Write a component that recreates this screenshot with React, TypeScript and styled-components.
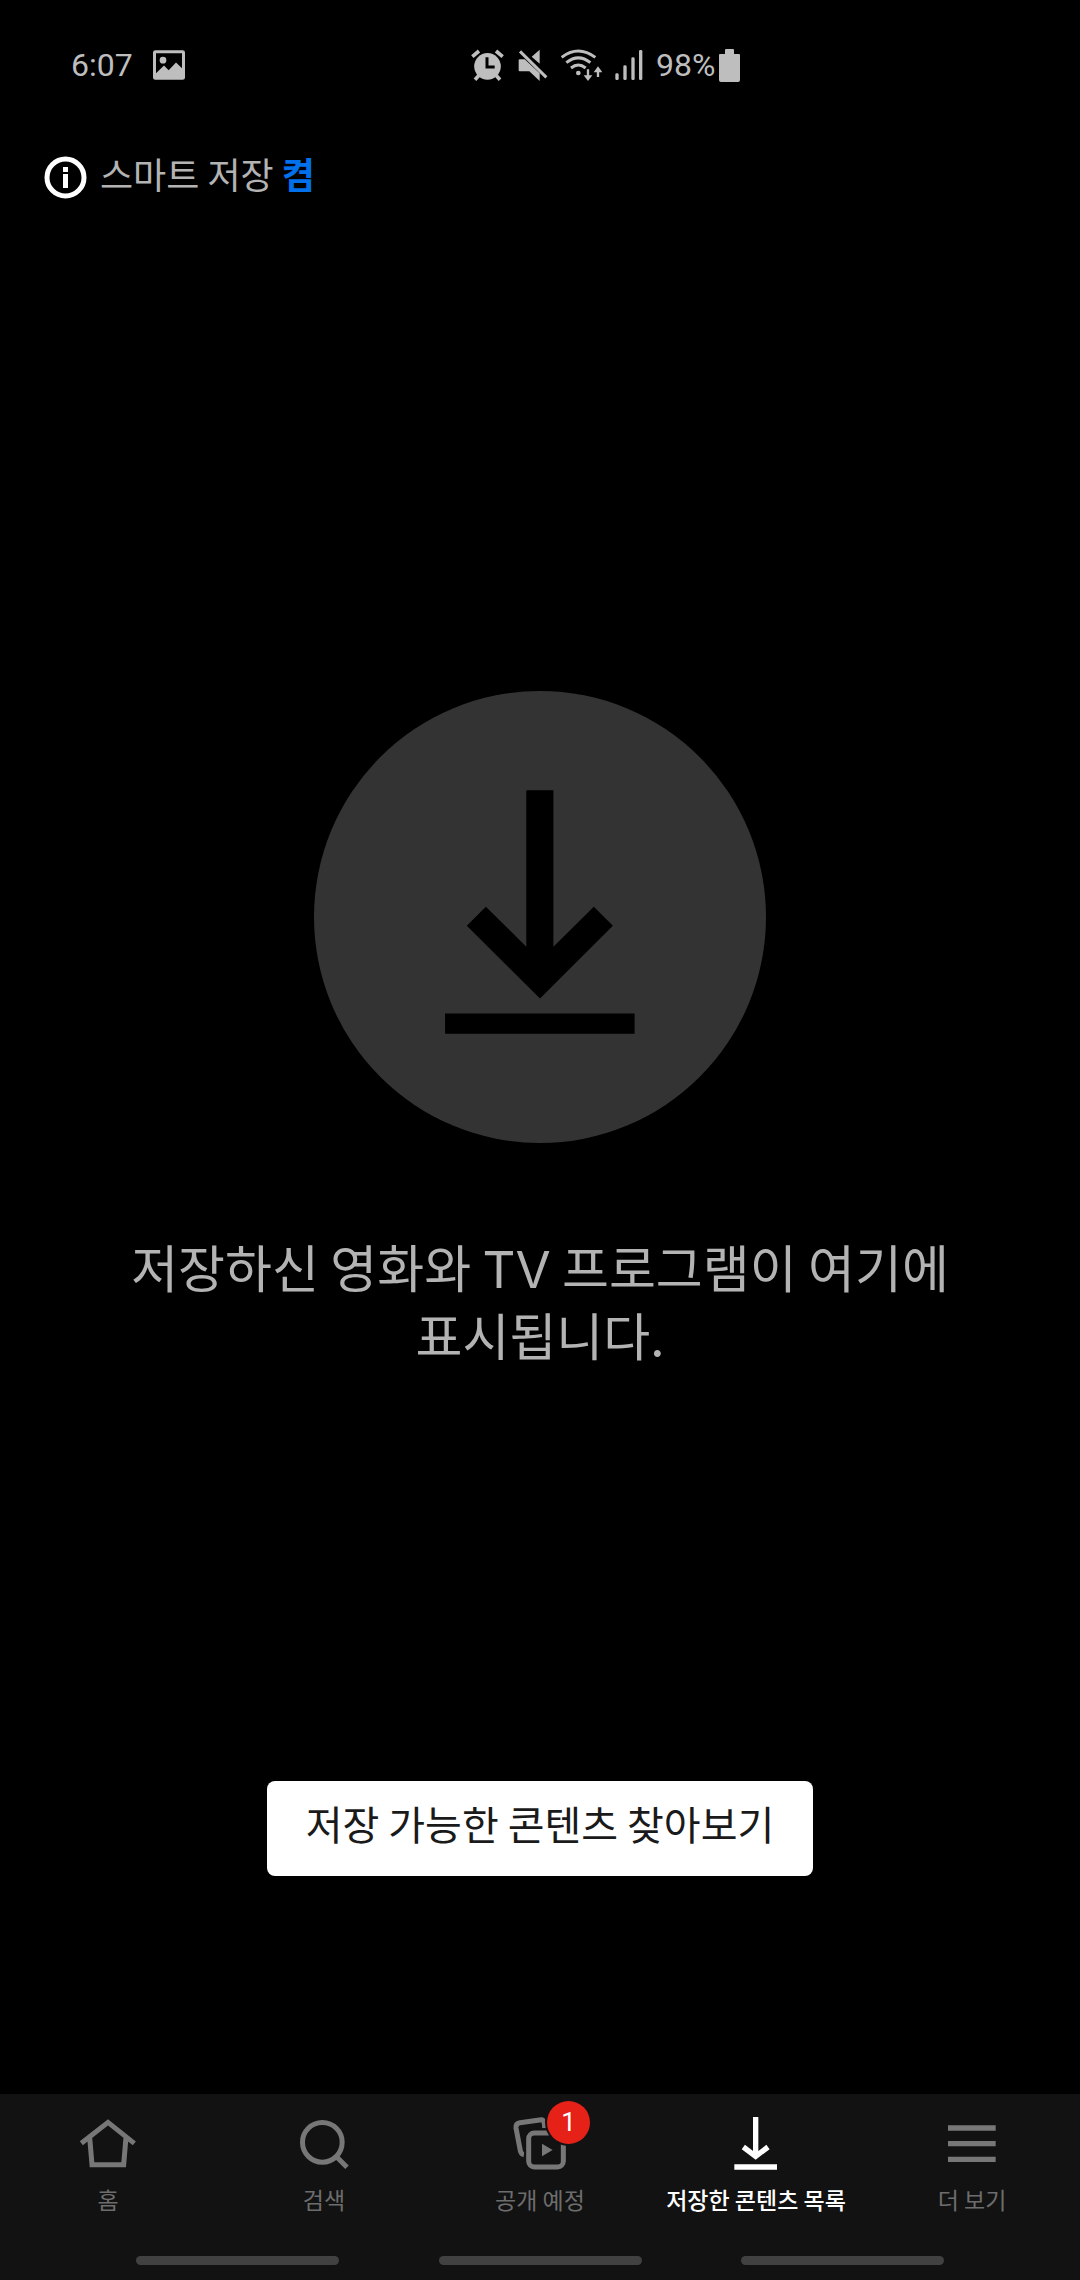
import React from "react";
import styled, { createGlobalStyle } from "styled-components";

const GlobalStyle = createGlobalStyle`
  *, *::before, *::after { box-sizing: border-box; }
  body {
    margin: 0;
    background: #000;
    color: #b3b3b3;
    font-family: "Noto Sans CJK KR", "Noto Sans", sans-serif;
  }
  svg { display: block; flex: none; }
`;

const Screen = styled.div`
  display: flex;
  flex-direction: column;
  min-height: 100vh;
`;

const StatusBar = styled.header`
  display: grid;
  grid-template-columns: 471px 1fr;
  align-items: center;
  height: 130px;
  font-family: Roboto, "Noto Sans", sans-serif;
  font-size: 32px;
  line-height: 40px;
  color: #bebebe;
`;

const StatusLeft = styled.div`
  display: flex;
  align-items: center;
  gap: 20px;
  padding-left: 71px;
`;

const StatusRight = styled.div`
  display: flex;
  align-items: center;
  gap: 13px;
`;

const Battery = styled.div`
  display: flex;
  align-items: center;
  gap: 4px;
`;

const SmartRow = styled.section`
  display: flex;
  align-items: center;
  gap: 13px;
  padding: 21px 44px;
`;

const SmartLabel = styled.p`
  margin: 0;
  padding-bottom: 8px;
  font-size: 36px;
  line-height: 44px;
`;

const SmartState = styled.a`
  color: #0071eb;
  font-weight: 700;
  text-decoration: none;
`;

const Empty = styled.main`
  flex: 1;
  display: flex;
  flex-direction: column;
  align-items: center;
  justify-content: flex-end;
  padding: 0 110px 218px;
`;

const Disc = styled.div`
  display: grid;
  place-items: center;
  width: 452px;
  height: 452px;
  padding-bottom: 11px;
  border-radius: 50%;
  background: #333;
`;

const Message = styled.h1`
  margin: 89px 0 413px;
  font-size: 51px;
  font-weight: 400;
  line-height: 68px;
  text-align: center;
  word-break: keep-all;
`;

const Latin = styled.span`
  font-family: Inter, sans-serif;
  line-height: 1;
`;

const BrowseButton = styled.button`
  padding: 12px 39px 23px;
  border: 0;
  border-radius: 8px;
  background: #fff;
  color: #1a1a1a;
  font-family: inherit;
  font-size: 40px;
  line-height: 60px;
  cursor: pointer;
`;

const TabBar = styled.nav`
  display: grid;
  grid-template-columns: repeat(5, 1fr);
  padding: 21px 0 42px;
  background: #121212;
`;

const Tab = styled.a<{ $active?: boolean }>`
  display: flex;
  flex-direction: column;
  align-items: center;
  gap: 11px;
  color: ${(p) => (p.$active ? "#fff" : "#6d6d6d")};
  font-size: 23px;
  font-weight: ${(p) => (p.$active ? 500 : 400)};
  line-height: 30px;
  white-space: nowrap;
  text-decoration: none;
`;

const TabIcon = styled.span<{ $active?: boolean }>`
  position: relative;
  color: ${(p) => (p.$active ? "#fff" : "#777")};
`;

const Badge = styled.span`
  position: absolute;
  top: -14px;
  left: 37px;
  width: 43px;
  height: 43px;
  border-radius: 50%;
  background: #e62117;
  color: #fff;
  font-family: Roboto, sans-serif;
  font-size: 26px;
  font-weight: 400;
  line-height: 42px;
  text-align: center;
`;

const GestureBar = styled.div`
  display: flex;
  justify-content: space-between;
  padding: 0 136px 15px;
  background: #121212;
`;

const GestureHint = styled.span`
  width: 203px;
  height: 9px;
  border-radius: 5px;
  background: #414141;
`;

const PictureIcon = () => (
  <svg width="32" height="30" viewBox="339 59 96 89" fill="currentColor" aria-hidden="true">
    <path
      fillRule="evenodd"
      d="M346 59h82q7 0 7 7v75q0 7-7 7h-82q-7 0-7-7V66q0-7 7-7zm2 9v60l24-23 14 14 22-23 18 17V68z"
    />
    <circle cx="369" cy="89" r="10" />
  </svg>
);

const AlarmIcon = () => (
  <svg width="34" height="32" viewBox="64 55 102 96" fill="none" stroke="currentColor" aria-hidden="true">
    <circle cx="113.500" cy="107" r="40" fill="currentColor" stroke="none" />
    <path strokeWidth="11" d="M68 78l20-17M159 78l-20-17M88 134l-12 13M139 134l12 13" />
    <path stroke="#000" strokeWidth="9" d="M112 80v29h23" />
  </svg>
);

const MuteIcon = () => (
  <svg width="30" height="32" viewBox="207 55 90 96" fill="currentColor" aria-hidden="true">
    <path d="M272 57v42l-24-21zM212 86h15l45 42v23l-31-29h-29q-3 0-3-3V89q0-3 3-3z" />
    <path fill="none" stroke="currentColor" strokeWidth="9" d="M213 62l79 78" />
  </svg>
);

const WifiIcon = () => (
  <svg width="41" height="33" viewBox="333 52 123 99" fill="none" stroke="currentColor" aria-hidden="true">
    <path strokeWidth="9" d="M335 77q50-38 101 0M349 93q36-29 72 0M363 109q22-18 44 0" />
    <circle cx="385" cy="124" r="7" fill="currentColor" stroke="none" />
    <path strokeWidth="7" d="M414 113v22M444 136v-22" />
    <path fill="currentColor" stroke="none" d="M401 131h26l-13 17zM431 122h26l-13-18z" />
  </svg>
);

const SignalIcon = () => (
  <svg width="28" height="30" viewBox="491 58 84 90" fill="currentColor" aria-hidden="true">
    <rect x="492" y="128" width="10" height="20" rx="4" />
    <rect x="516" y="104" width="10" height="44" rx="4" />
    <rect x="540" y="80" width="10" height="68" rx="4" />
    <rect x="563" y="58" width="10" height="90" rx="4" />
  </svg>
);

const BatteryIcon = () => (
  <svg width="21" height="33" viewBox="0 0 21 33" fill="currentColor" aria-hidden="true">
    <path d="M6 1q0-1 1-1h7q1 0 1 1v4h5q1 0 1 1v25q0 2-2 2H2q-2 0-2-2V6q0-1 1-1h5z" />
  </svg>
);

const InfoIcon = () => (
  <svg width="43" height="43" viewBox="0 0 43 43" fill="#fff" aria-hidden="true">
    <circle cx="21.500" cy="21.500" r="18.500" fill="none" stroke="#fff" strokeWidth="5" />
    <path d="M19 11h5v5h-5zM19 18h5v14h-5z" />
  </svg>
);

const BigDownload = () => (
  <svg width="190" height="244" viewBox="435 360 568 730" fill="#000" aria-hidden="true">
    <path d="M678 361h81v468l121-120 57 57-218 218-219-218 57-57 121 120zM435 1029h567v60H435z" />
  </svg>
);

const HomeIcon = () => (
  <svg width="60" height="58" viewBox="233 105 180 174" fill="none" stroke="currentColor" strokeWidth="15" aria-hidden="true">
    <path d="M243 190l80-63 79 63M268 172l7 82h95l7-82" />
  </svg>
);

const SearchIcon = () => (
  <svg width="60" height="58" viewBox="882 105 180 174" fill="none" stroke="currentColor" strokeWidth="15" aria-hidden="true">
    <circle cx="967" cy="187" r="59.500" />
    <path d="M1008 229l33 33" />
  </svg>
);

const ComingIcon = () => (
  <svg width="60" height="58" viewBox="330 105 180 174" fill="none" stroke="currentColor" strokeWidth="15" aria-hidden="true">
    <path d="M372 224q-9-2-11-12l-13-68q-2-13 12-16l64-9q10-1 10 26" />
    <rect x="372" y="145" width="131" height="130" rx="32" fill="#121212" stroke="none" />
    <rect x="386" y="159" width="104" height="102" rx="17" />
    <path fill="currentColor" stroke="none" d="M426 191l32 19-32 19z" />
    <circle cx="506" cy="127" r="71" fill="#121212" stroke="none" />
  </svg>
);

const DownloadIcon = () => (
  <svg width="60" height="58" viewBox="258 105 180 174" fill="none" stroke="currentColor" strokeWidth="16" aria-hidden="true">
    <path d="M347 111v115M310 201l37 28 37-28M283 261h128" />
  </svg>
);

const MenuIcon = () => (
  <svg width="60" height="58" viewBox="906 105 180 174" fill="none" stroke="currentColor" strokeWidth="16" aria-hidden="true">
    <path d="M924 144h143M924 191h143M924 238h143" />
  </svg>
);

const tabs = [
  { label: "홈", Icon: HomeIcon },
  { label: "검색", Icon: SearchIcon },
  { label: "공개 예정", Icon: ComingIcon, badge: 1 },
  { label: "저장한 콘텐츠 목록", Icon: DownloadIcon, active: true },
  { label: "더 보기", Icon: MenuIcon },
];

export default function App() {
  return (
    <Screen>
      <GlobalStyle />
      <StatusBar>
        <StatusLeft>
          <span>6:07</span>
          <PictureIcon />
        </StatusLeft>
        <StatusRight>
          <AlarmIcon />
          <MuteIcon />
          <WifiIcon />
          <SignalIcon />
          <Battery>
            <span>98%</span>
            <BatteryIcon />
          </Battery>
        </StatusRight>
      </StatusBar>
      <SmartRow>
        <InfoIcon />
        <SmartLabel>
          스마트 저장 <SmartState href="#smart">켬</SmartState>
        </SmartLabel>
      </SmartRow>
      <Empty>
        <Disc>
          <BigDownload />
        </Disc>
        <Message>
          저장하신 영화와 <Latin>TV</Latin> 프로그램이 여기에 표시됩니다.
        </Message>
        <BrowseButton type="button">저장 가능한 콘텐츠 찾아보기</BrowseButton>
      </Empty>
      <TabBar>
        {tabs.map(({ label, Icon, badge, active }) => (
          <Tab key={label} href="#" $active={active} aria-current={active ? "page" : undefined}>
            <TabIcon $active={active}>
              <Icon />
              {badge && <Badge>{badge}</Badge>}
            </TabIcon>
            {label}
          </Tab>
        ))}
      </TabBar>
      <GestureBar>
        <GestureHint />
        <GestureHint />
        <GestureHint />
      </GestureBar>
    </Screen>
  );
}
